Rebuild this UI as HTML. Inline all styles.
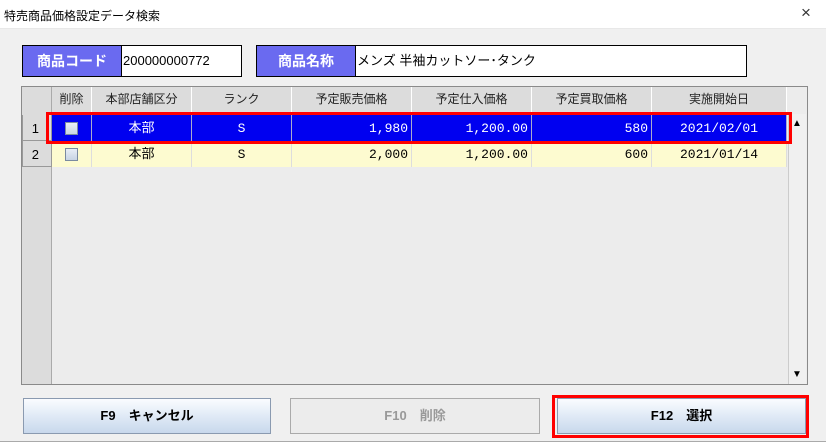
<!DOCTYPE html><html><head><meta charset="utf-8"><style>
*{margin:0;padding:0;box-sizing:border-box}
body{width:826px;height:448px;background:#f0f0f0;font-family:"Liberation Sans","Noto Sans CJK JP",sans-serif;position:relative;overflow:hidden;font-size:12px;color:#000}
.a{position:absolute}
.title{left:0;top:0;width:826px;height:28px;background:#fff;}
.lbl{background:#6a6af0;color:#fff;font-weight:bold;font-size:14px;text-align:center;line-height:30px;border:1px solid #000}
.inp{background:#fff;border:1px solid #000;font-size:13px;line-height:30px;padding-left:1px}
.hd{background:#dcdcdc;border-right:1px solid #fff;text-align:center;line-height:25px;font-size:12px;color:#222}
.c{height:26px;line-height:28px;font-size:13px;border-right:1px solid #ddd;padding:0 3px;font-family:"Liberation Mono","Noto Sans CJK JP",monospace}
.r1 .c{background:#0000f0;color:#fff;border-right-color:#aac}
.r2 .c{background:#fdfbd0}
.cb{display:inline-block;width:13px;height:13px;border:1px solid #7a8aa0;background:linear-gradient(#e8eef6,#c8d4e4);vertical-align:middle}
.btn{border:1px solid #8a9ab0;background:linear-gradient(#fafcff,#e0eaf6 50%,#c8d8ec);text-align:center;line-height:34px;font-weight:bold;font-size:13px}
.rn{left:22px;width:30px;height:26px;line-height:27px;text-align:right;padding-right:12px;border:1px solid #999;border-top:none;font-size:13px}
</style></head><body>
<div class="a title"><div class="a" style="left:4px;top:7px;font-size:12px">特売商品価格設定データ検索</div><div class="a" style="left:801px;top:3px;font-size:17px;color:#333;font-weight:100">×</div></div>
<div class="a" style="left:0;top:28px;width:826px;height:1px;background:#e8e8e8"></div>
<div class="a lbl" style="left:22px;top:45px;width:100px;height:32px">商品コード</div>
<div class="a inp" style="left:121px;top:45px;width:121px;height:32px">200000000772</div>
<div class="a lbl" style="left:256px;top:45px;width:100px;height:32px">商品名称</div>
<div class="a inp" style="left:355px;top:45px;width:392px;height:32px">メンズ 半袖カットソー･タンク</div>
<div class="a" style="left:21px;top:86px;width:787px;height:299px;border:1px solid #8a8a8a;background:#ececec"></div>
<div class="a" style="left:22px;top:87px;width:30px;height:297px;background:#dcdcdc;border-right:1px solid #aaa"></div>
<div class="a" style="left:52px;top:87px;width:736px;height:27px;display:flex;border-bottom:1px solid #aaa">
<div class="hd" style="width:40px">削除</div><div class="hd" style="width:100px">本部店舗区分</div><div class="hd" style="width:100px">ランク</div><div class="hd" style="width:120px">予定販売価格</div><div class="hd" style="width:120px">予定仕入価格</div><div class="hd" style="width:120px">予定買取価格</div><div class="hd" style="width:135px">実施開始日</div></div>
<div class="a rn" style="top:115px">1</div>
<div class="a rn" style="top:141px">2</div>
<div class="a r1" style="left:52px;top:115px;display:flex">
<div class="c" style="width:40px;text-align:center"><span class="cb"></span></div><div class="c" style="width:100px;text-align:center">本部</div><div class="c" style="width:100px;text-align:center">S</div><div class="c" style="width:120px;text-align:right">1,980</div><div class="c" style="width:120px;text-align:right">1,200.00</div><div class="c" style="width:120px;text-align:right">580</div><div class="c" style="width:135px;text-align:center">2021/02/01</div></div>
<div class="a r2" style="left:52px;top:141px;display:flex">
<div class="c" style="width:40px;text-align:center"><span class="cb"></span></div><div class="c" style="width:100px;text-align:center">本部</div><div class="c" style="width:100px;text-align:center">S</div><div class="c" style="width:120px;text-align:right">2,000</div><div class="c" style="width:120px;text-align:right">1,200.00</div><div class="c" style="width:120px;text-align:right">600</div><div class="c" style="width:135px;text-align:center">2021/01/14</div></div>
<div class="a" style="left:788px;top:114px;width:18px;height:270px;background:#f0f0f0;border-left:1px solid #ccc"><div class="a" style="left:3px;top:4px;font-size:10px">▲</div><div class="a" style="left:3px;top:255px;font-size:10px">▼</div></div>
<div class="a" style="left:46px;top:112px;width:746px;height:32px;border:3px solid #f00"></div>
<div class="a btn" style="left:23px;top:398px;width:248px;height:36px">F9　キャンセル</div>
<div class="a" style="left:290px;top:398px;width:250px;height:36px;border:1px solid #aaa;background:#ececec;text-align:center;line-height:34px;color:#999;font-weight:bold;font-size:13px">F10　削除</div>
<div class="a btn" style="left:557px;top:398px;width:249px;height:36px">F12　選択</div>
<div class="a" style="left:552px;top:395px;width:257px;height:43px;border:3px solid #f00"></div>
<div class="a" style="left:0;top:441px;width:826px;height:7px;border-top:1px solid #aaa;background:#fff"></div>
</body></html>
